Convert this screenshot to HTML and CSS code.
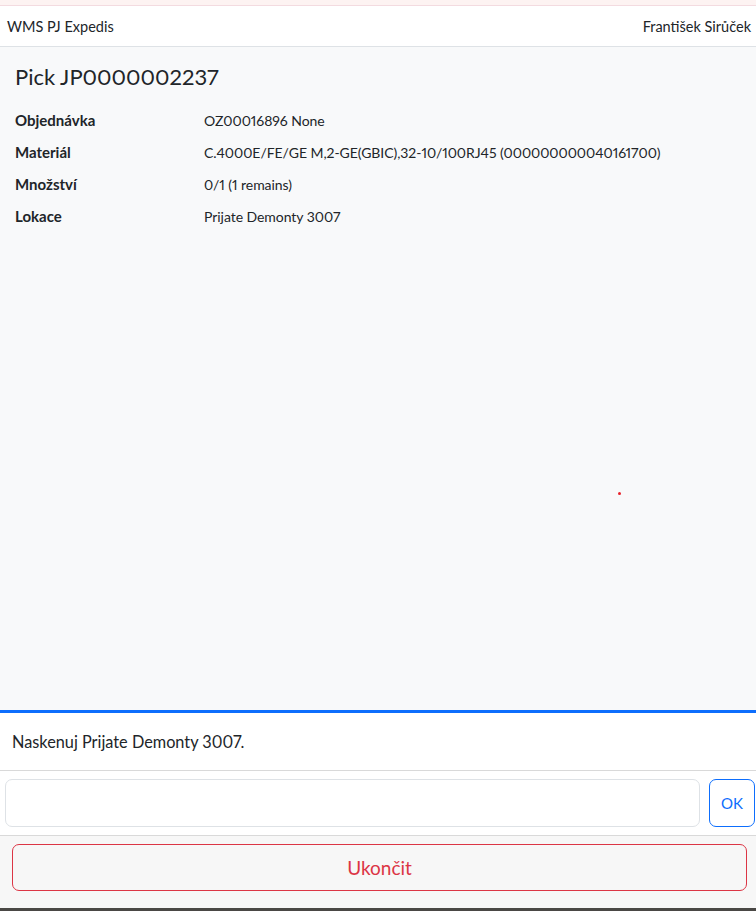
FILE: index.html
```
<!DOCTYPE html>
<html lang="cs">
<head>
<meta charset="utf-8">
<title>WMS PJ Expedis</title>
<link rel="stylesheet" href="styles.css">
</head>
<body>
<div class="app">
  <div class="alert-strip"></div>
  <header class="topbar">
    <span class="brand">WMS PJ Expedis</span>
    <span class="user">František Sirůček</span>
  </header>
  <main class="content">
    <h1 class="title">Pick JP0000002237</h1>
    <dl class="details">
      <div class="row"><dt>Objednávka</dt><dd>OZ00016896 None</dd></div>
      <div class="row"><dt>Materiál</dt><dd>C.4000E/FE/GE M,2-GE(GBIC),32-10/100RJ45 (000000000040161700)</dd></div>
      <div class="row"><dt>Množství</dt><dd>0/1 (1 remains)</dd></div>
      <div class="row"><dt>Lokace</dt><dd>Prijate Demonty 3007</dd></div>
    </dl>
    <span class="dot"></span>
  </main>
  <footer class="panel">
    <div class="message">Naskenuj Prijate Demonty 3007.</div>
    <div class="scan-row">
      <input class="scan-input" type="text">
      <button class="btn-ok">OK</button>
    </div>
    <div class="actions">
      <button class="btn-end">Ukončit</button>
    </div>
    <div class="bottom-strip"></div>
  </footer>
</div>
</body>
</html>
```
FILE: styles.css
```
* { box-sizing: border-box; }
html, body { margin: 0; padding: 0; height: 100%; }
body {
  font-family: "Lato", "Liberation Sans", sans-serif;
  font-feature-settings: "pnum" 1;
  color: #212529;
  background: #f8f9fa;
}
.app {
  height: 911px;
  display: flex;
  flex-direction: column;
}
.alert-strip {
  height: 6px;
  background: #fdf3f2;
  border-bottom: 1px solid #f3dbe0;
}
.topbar {
  height: 41px;
  background: #fff;
  border-bottom: 1px solid #dee2e6;
  display: flex;
  justify-content: space-between;
  align-items: center;
  padding: 0 5px 0 7px;
  font-size: 14.5px;
}
.content {
  flex: 1;
  position: relative;
  padding: 15px 15px;
  background: #f8f9fa;
}
.title {
  margin: 0 0 12px;
  font-size: 22px;
  font-weight: 400;
  line-height: 30px;
}
.details { margin: 0; font-size: 15px; }
.row {
  display: flex;
  height: 32px;
  align-items: center;
}
.row dt { flex: 0 0 189px; font-weight: 700; }
.row dd { margin: 0; font-size: 14px; letter-spacing: -0.05px; }
.dot {
  position: absolute;
  left: 618px;
  top: 445px;
  width: 3px;
  height: 3px;
  border-radius: 50%;
  background: #e8202a;
}
.panel {
  border-top: 3px solid #0d6efd;
  background: #fff;
}
.message {
  height: 58px;
  display: flex;
  align-items: center;
  padding: 0 12px;
  font-size: 16.3px;
  border-bottom: 1px solid #d9d9d9;
}
.scan-row {
  display: flex;
  gap: 9px;
  padding: 8px 1px 8px 5px;
  border-bottom: 1px solid #d9d9d9;
}
.scan-input {
  flex: 1;
  height: 48px;
  border: 1px solid #dee2e6;
  border-radius: 7px;
  background: #fff;
  font: inherit;
}
.btn-ok {
  width: 46px;
  height: 48px;
  border: 1px solid #0d6efd;
  border-radius: 7px;
  background: #fff;
  color: #0d6efd;
  font-family: inherit;
  font-size: 15px;
}
.actions {
  background: #f7f7f7;
  padding: 8px 9px 17px 12px;
}
.btn-end {
  width: 100%;
  height: 47px;
  border: 1px solid #dc3545;
  border-radius: 7px;
  background: #f7f7f7;
  color: #dc3545;
  font-family: inherit;
  font-size: 19px;
}
.bottom-strip {
  height: 3px;
  background: #4a4845;
}
```
